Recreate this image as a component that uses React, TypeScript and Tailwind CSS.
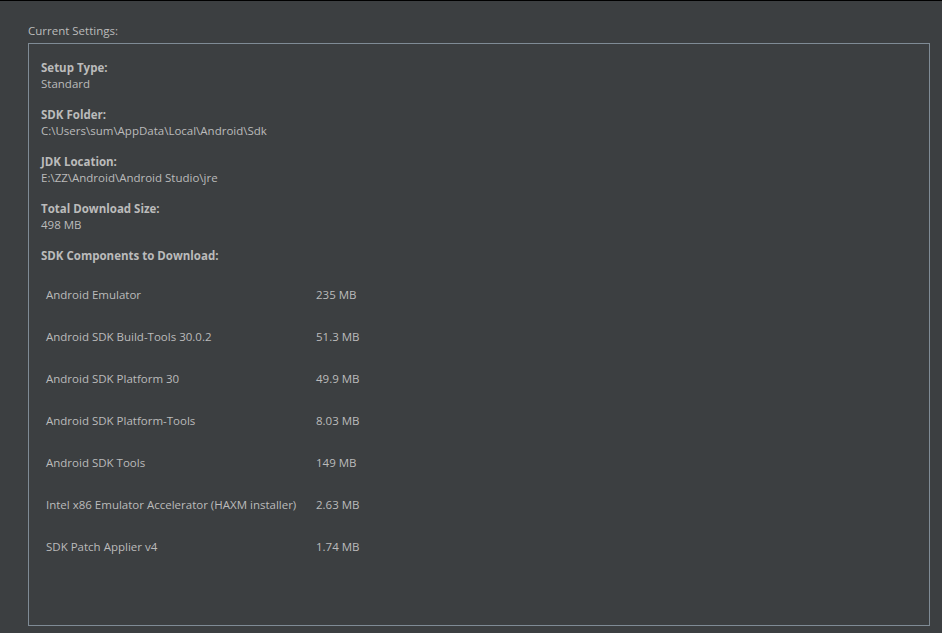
import React from 'react';

const settings = [
  { label: 'Setup Type:', value: 'Standard' },
  { label: 'SDK Folder:', value: 'C:\\Users\\sum\\AppData\\Local\\Android\\Sdk' },
  { label: 'JDK Location:', value: 'E:\\ZZ\\Android\\Android Studio\\jre' },
  { label: 'Total Download Size:', value: '498 MB' },
];

const components = [
  ['Android Emulator', '235 MB'],
  ['Android SDK Build-Tools 30.0.2', '51.3 MB'],
  ['Android SDK Platform 30', '49.9 MB'],
  ['Android SDK Platform-Tools', '8.03 MB'],
  ['Android SDK Tools', '149 MB'],
  ['Intel x86 Emulator Accelerator (HAXM installer)', '2.63 MB'],
  ['SDK Patch Applier v4', '1.74 MB'],
];

export default function App() {
  return (
    <div
      className="w-[942px] h-[633px] bg-[#3c3f41] border-t border-black text-[#bbbbbb] text-[11.5px] leading-4 overflow-hidden"
      style={{ fontFamily: '"Open Sans", "Noto Sans", sans-serif' }}
    >
      <div className="pt-[22px] pl-[28px]">Current Settings:</div>
      <div className="ml-[28px] mt-[4px] w-[902px] h-[583px] border border-[#7f8b95] pl-[12px] pt-[16px]">
        <div className="flex flex-col gap-[15px]">
          {settings.map((s) => (
            <div key={s.label}>
              <div className="font-bold">{s.label}</div>
              <div>{s.value}</div>
            </div>
          ))}
          <div className="font-bold">SDK Components to Download:</div>
        </div>
        <div className="mt-[10px] pl-[5px]">
          {components.map(([name, size]) => (
            <div key={name} className="flex items-center h-[42px]">
              <div className="w-[270px]">{name}</div>
              <div>{size}</div>
            </div>
          ))}
        </div>
      </div>
    </div>
  );
}
